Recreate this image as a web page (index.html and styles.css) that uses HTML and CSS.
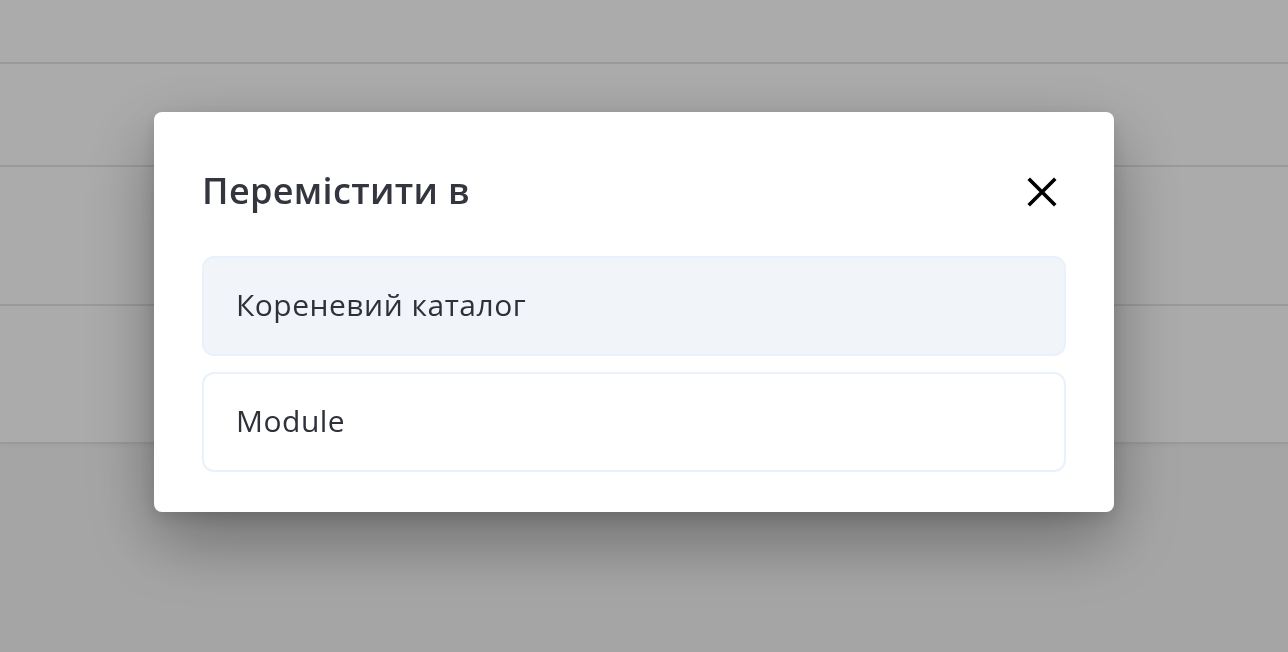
FILE: index.html
```html
<!DOCTYPE html>
<html lang="uk">
<head>
<meta charset="utf-8">
<title>Перемістити в</title>
<link rel="stylesheet" href="styles.css">
</head>
<body>
<div class="page">
  <header class="topbar"></header>
  <main class="panel">
    <div class="row row-a"></div>
    <div class="row row-b"></div>
    <div class="row row-c"></div>
  </main>
</div>
<div class="overlay">
  <div class="modal" role="dialog">
    <div class="modal-head">
      <h2 class="modal-title">Перемістити в</h2>
      <button class="close" aria-label="Закрити">
        <svg width="30" height="30" viewBox="0 0 30 30"><path d="M3 3 L27 27 M27 3 L3 27" stroke="#000" stroke-width="3.6" stroke-linecap="square" fill="none"/></svg>
      </button>
    </div>
    <ul class="list">
      <li class="item item-active">Кореневий каталог</li>
      <li class="item">Module</li>
    </ul>
  </div>
</div>
</body>
</html>
```
FILE: styles.css
```css
* { box-sizing: border-box; }
html, body { margin: 0; padding: 0; }
body {
  width: 1288px;
  height: 652px;
  overflow: hidden;
  background: #f7f7f8;
  font-family: "Open Sans", "Noto Sans", sans-serif;
}
.page { display: flex; flex-direction: column; }
.topbar {
  height: 64px;
  background: #fff;
  border-bottom: 2px solid #e3e7ec;
}
.panel {
  background: #fff;
  border-bottom: 2px solid #e3e7ec;
  box-shadow: 0 2px 4px rgba(0,0,0,0.04);
}
.row { border-bottom: 2px solid #e3e7ec; }
.row-a { height: 103px; }
.row-b { height: 139px; }
.row-c { height: 136px; border-bottom: none; }

.overlay {
  position: fixed;
  inset: 0;
  background: rgba(0,0,0,0.33);
  display: flex;
  align-items: flex-start;
  padding: 112px 0 0 154px;
}
.modal {
  width: 960px;
  background: #fff;
  border-radius: 8px;
  padding: 48px 48px 40px;
  box-shadow: 0 28px 70px rgba(0,0,0,0.35), 0 6px 16px rgba(0,0,0,0.12);
}
.modal-head {
  height: 64px;
  display: flex;
  align-items: center;
  justify-content: space-between;
  margin-bottom: 32px;
}
.modal-title {
  margin: 0;
  padding-bottom: 4px;
  font-size: 36px;
  font-weight: 600;
  color: #33363f;
  letter-spacing: 0.35px;
}
.close {
  width: 48px;
  height: 48px;
  border: none;
  background: none;
  padding: 0;
  display: flex;
  align-items: center;
  justify-content: center;
  cursor: pointer;
}
.list {
  list-style: none;
  margin: 0;
  padding: 0;
  display: flex;
  flex-direction: column;
  gap: 16px;
}
.item {
  height: 100px;
  display: flex;
  align-items: center;
  padding: 0 32px 4px;
  border: 2px solid #e8f1fc;
  border-radius: 12px;
  font-size: 30px;
  letter-spacing: 0.5px;
  color: #2e313a;
  background: #fff;
}
.item-active { background: #f1f5f9; }
```
